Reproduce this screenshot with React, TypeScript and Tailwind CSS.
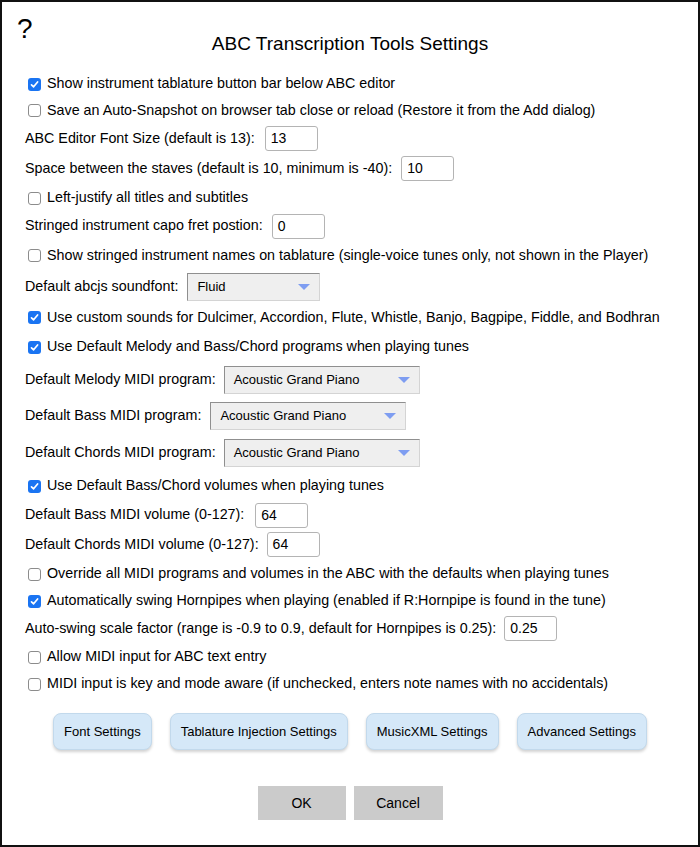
import React from 'react';

const font = { fontFamily: '"Liberation Sans", Arial, sans-serif' };

function Check({ checked }: { checked?: boolean }) {
  return checked ? (
    <span className="ml-[3px] mr-[6px] flex h-[13px] w-[13px] shrink-0 items-center justify-center rounded-[3px] bg-[#1a74f2]">
      <svg width="9" height="9" viewBox="0 0 9 9">
        <path d="M1.5 4.8 L3.6 6.8 L7.6 2" fill="none" stroke="#fff" strokeWidth="1.7" strokeLinecap="round" strokeLinejoin="round" />
      </svg>
    </span>
  ) : (
    <span className="ml-[3px] mr-[6px] h-[13px] w-[13px] shrink-0 rounded-[3px] border border-[#8c8c8c] bg-white" />
  );
}

function CheckRow({ h, checked, children }: { h: string; checked?: boolean; children: React.ReactNode }) {
  return (
    <div className={`flex items-center ${h}`}>
      <Check checked={checked} />
      <span>{children}</span>
    </div>
  );
}

function NumInput({ value, ml }: { value: string; ml: string }) {
  return (
    <div className={`flex h-[25px] w-[53px] ${ml} items-center rounded-[3px] border border-[#b4b4b4] bg-white pl-[5px] text-[14px]`}>
      {value}
    </div>
  );
}

function Select({ value, w, ml }: { value: string; w: string; ml: string }) {
  return (
    <div className={`${ml} flex h-[28px] ${w} items-center justify-between border border-t-[#8f8f8f] border-l-[#8f8f8f] border-r-[#d4d4d4] border-b-[#d4d4d4] bg-[#efefef] pl-[9px] pr-[9px] text-[13px]`}>
      <span>{value}</span>
      <svg width="12" height="6" viewBox="0 0 12 6">
        <polygon points="0,0 12,0 6,6" fill="#7e9df1" />
      </svg>
    </div>
  );
}

export default function App() {
  return (
    <div className="h-[847px] w-[700px] border-2 border-[#111] bg-white text-black" style={font}>
      <div className="h-[68px]">
        <div className="pl-[15px] pt-[13px] text-[28px] leading-[28px]">?</div>
        <div className="-mt-[10px] text-center text-[19px] leading-[22px]">ABC Transcription Tools Settings</div>
      </div>

      <div className="pl-[23px] pt-[1px] text-[14.3px]">
        <CheckRow h="h-[26px]" checked>Show instrument tablature button bar below ABC editor</CheckRow>
        <CheckRow h="h-[27px]">Save an Auto-Snapshot on browser tab close or reload (Restore it from the Add dialog)</CheckRow>
        <div className="flex h-[29px] items-center">
          <span>ABC Editor Font Size (default is 13):</span>
          <NumInput value="13" ml="ml-[10px]" />
        </div>
        <div className="flex h-[31px] items-center">
          <span>Space between the staves (default is 10, minimum is -40):</span>
          <NumInput value="10" ml="ml-[9px]" />
        </div>
        <CheckRow h="h-[28px]">Left-justify all titles and subtitles</CheckRow>
        <div className="flex h-[28px] items-center">
          <span>Stringed instrument capo fret postion:</span>
          <NumInput value="0" ml="ml-[9px]" />
        </div>
        <CheckRow h="h-[31px]">Show stringed instrument names on tablature (single-voice tunes only, not shown in the Player)</CheckRow>
        <div className="flex h-[32px] items-center">
          <span>Default abcjs soundfont:</span>
          <Select value="Fluid" w="w-[133px]" ml="ml-[9px]" />
        </div>
        <CheckRow h="h-[29px]" checked>Use custom sounds for Dulcimer, Accordion, Flute, Whistle, Banjo, Bagpipe, Fiddle, and Bodhran</CheckRow>
        <CheckRow h="h-[30px]" checked>Use Default Melody and Bass/Chord programs when playing tunes</CheckRow>
        <div className="flex h-[35px] items-center">
          <span>Default Melody MIDI program:</span>
          <Select value="Acoustic Grand Piano" w="w-[196px]" ml="ml-[8px]" />
        </div>
        <div className="flex h-[38px] items-center">
          <span>Default Bass MIDI program:</span>
          <Select value="Acoustic Grand Piano" w="w-[196px]" ml="ml-[9px]" />
        </div>
        <div className="flex h-[36px] items-center">
          <span>Default Chords MIDI program:</span>
          <Select value="Acoustic Grand Piano" w="w-[196px]" ml="ml-[8px]" />
        </div>
        <CheckRow h="h-[30px]" checked>Use Default Bass/Chord volumes when playing tunes</CheckRow>
        <div className="flex h-[28px] items-center">
          <span>Default Bass MIDI volume (0-127):</span>
          <NumInput value="64" ml="ml-[11px]" />
        </div>
        <div className="flex h-[31px] items-center">
          <span>Default Chords MIDI volume (0-127):</span>
          <NumInput value="64" ml="ml-[8px]" />
        </div>
        <CheckRow h="h-[28px]">Override all MIDI programs and volumes in the ABC with the defaults when playing tunes</CheckRow>
        <CheckRow h="h-[26px]" checked>Automatically swing Hornpipes when playing (enabled if R:Hornpipe is found in the tune)</CheckRow>
        <div className="flex h-[29px] items-center">
          <span>Auto-swing scale factor (range is -0.9 to 0.9, default for Hornpipes is 0.25):</span>
          <NumInput value="0.25" ml="ml-[8px]" />
        </div>
        <CheckRow h="h-[28px]">Allow MIDI input for ABC text entry</CheckRow>
        <CheckRow h="h-[26px]">MIDI input is key and mode aware (if unchecked, enters note names with no accidentals)</CheckRow>
      </div>

      <div className="mt-[16px] flex justify-center gap-[18px] text-[13px]">
        {['Font Settings', 'Tablature Injection Settings', 'MusicXML Settings', 'Advanced Settings'].map((label) => (
          <button
            key={label}
            className="h-[37px] rounded-[8px] border border-[#c2d9ec] bg-[#d5e8f8] px-[10px] shadow-[0_2px_3px_rgba(0,0,0,0.18)]"
          >
            {label}
          </button>
        ))}
      </div>

      <div className="mt-[36px] flex justify-center gap-[8px] text-[14px]">
        <button className="h-[34px] w-[88px] bg-[#cbcbcb]">OK</button>
        <button className="h-[34px] w-[89px] bg-[#cbcbcb]">Cancel</button>
      </div>
    </div>
  );
}
